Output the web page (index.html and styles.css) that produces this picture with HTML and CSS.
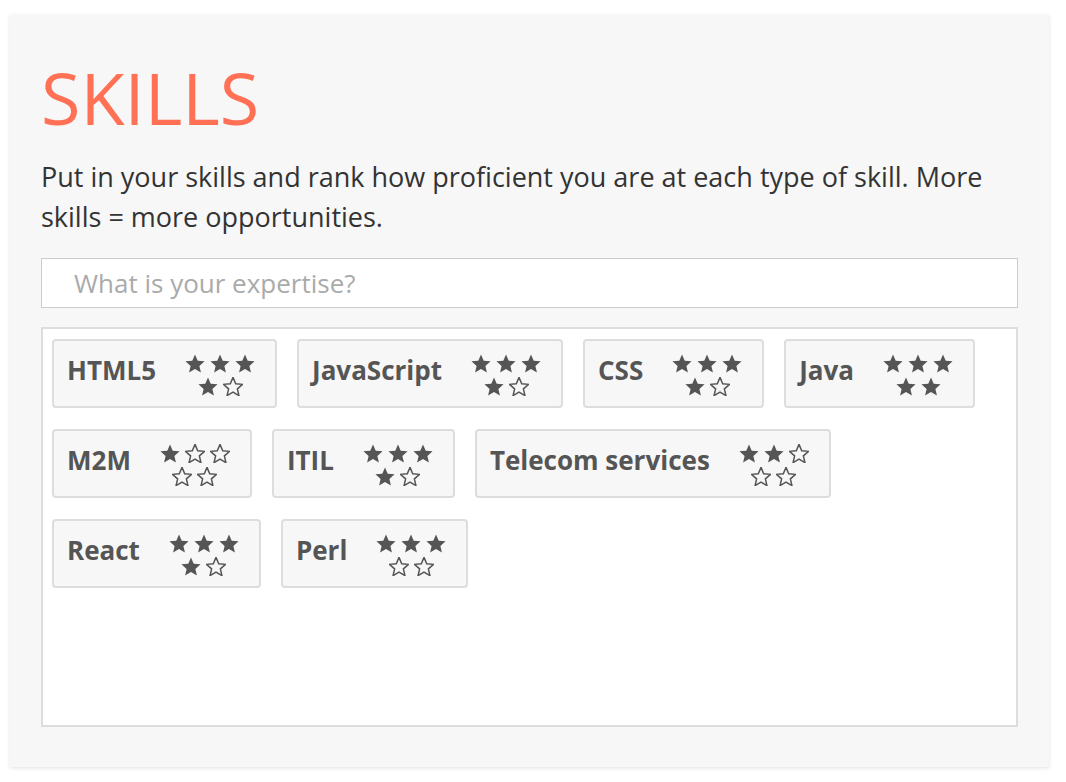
FILE: index.html
```html
<!DOCTYPE html>
<html>
<head>
<meta charset="utf-8">
<link rel="stylesheet" href="styles.css">
</head>
<body>
<svg width="0" height="0" class="defs">
  <defs>
    <polygon id="star" points="12,2.5 14.7,8.78 21.51,9.41 16.37,13.92 17.88,20.59 12,17.1 6.12,20.59 7.63,13.92 2.49,9.41 9.3,8.78"/>
  </defs>
</svg>
<div class="card">
  <h1 class="title">SKILLS</h1>
  <p class="intro">Put in your skills and rank how proficient you are at each type of skill. More skills = more opportunities.</p>
  <input class="search" type="text" placeholder="What is your expertise?">
  <div class="skills" id="skills"></div>
</div>
<script src="script.js"></script>
</body>
</html>
```
FILE: script.js
```js
var data = [
  ["HTML5", 4], ["JavaScript", 4], ["CSS", 4], ["Java", 5],
  ["M2M", 1], ["ITIL", 4], ["Telecom services", 2],
  ["React", 4], ["Perl", 3]
];
var box = document.getElementById("skills");
data.forEach(function (d) {
  var tag = document.createElement("div");
  tag.className = "tag";
  var label = document.createElement("span");
  label.className = "label";
  label.textContent = d[0];
  tag.appendChild(label);
  var stars = document.createElement("span");
  stars.className = "stars";
  var html = "";
  for (var i = 0; i < 5; i++) {
    var cls = i < d[1] ? "star full" : "star empty";
    html += '<svg class="' + cls + '" viewBox="2.1 2.1 19.8 18.9"><use href="#star"/></svg>';
  }
  stars.innerHTML = html;
  tag.appendChild(stars);
  box.appendChild(tag);
});
```
FILE: styles.css
```css
html, body {
  margin: 0;
  padding: 0;
  background: #ffffff;
}
body {
  padding: 15px 17px 14px 10px;
  font-family: "Open Sans", "DejaVu Sans", sans-serif;
}
.defs {
  position: absolute;
}
.card {
  background: #f7f7f7;
  box-shadow: 0 1px 4px rgba(0, 0, 0, 0.12);
  padding: 31px 31px 40px 31px;
  display: flex;
  flex-direction: column;
}
.title {
  margin: 0;
  font-size: 72px;
  font-weight: 400;
  line-height: 102px;
  color: #ff7055;
}
.intro {
  margin: 9px 0 0 0;
  font-size: 27px;
  line-height: 40px;
  color: #333333;
}
.search {
  margin: 21px 0 0 0;
  height: 50px;
  box-sizing: border-box;
  border: 1px solid #cccccc;
  background: #ffffff;
  padding: 0 32px;
  font-family: "Open Sans", "DejaVu Sans", sans-serif;
  font-size: 26px;
  color: #333;
  outline: none;
}
.search::placeholder {
  color: #aaaaaa;
}
.skills {
  margin-top: 19px;
  height: 400px;
  box-sizing: border-box;
  border: 2px solid #dddddd;
  background: #ffffff;
  padding: 10px 9px;
  display: flex;
  flex-wrap: wrap;
  align-content: flex-start;
  gap: 21px 20px;
}
.tag {
  height: 69px;
  box-sizing: border-box;
  border: 2px solid #dddddd;
  border-radius: 4px;
  background: #f7f7f7;
  display: flex;
  align-items: center;
  padding: 0 20px 0 13px;
  gap: 29px;
}
.label {
  font-size: 26px;
  font-weight: 700;
  color: #555555;
  margin-bottom: 7px;
  white-space: nowrap;
}
.stars {
  width: 70px;
  display: flex;
  flex-wrap: wrap;
  justify-content: center;
  gap: 4px 5px;
  margin-top: 2px;
}
.star {
  width: 20px;
  height: 19px;
  display: block;
}
.star.full {
  fill: #555555;
}
.star.empty {
  fill: none;
  stroke: #555555;
  stroke-width: 1.5;
}
```
